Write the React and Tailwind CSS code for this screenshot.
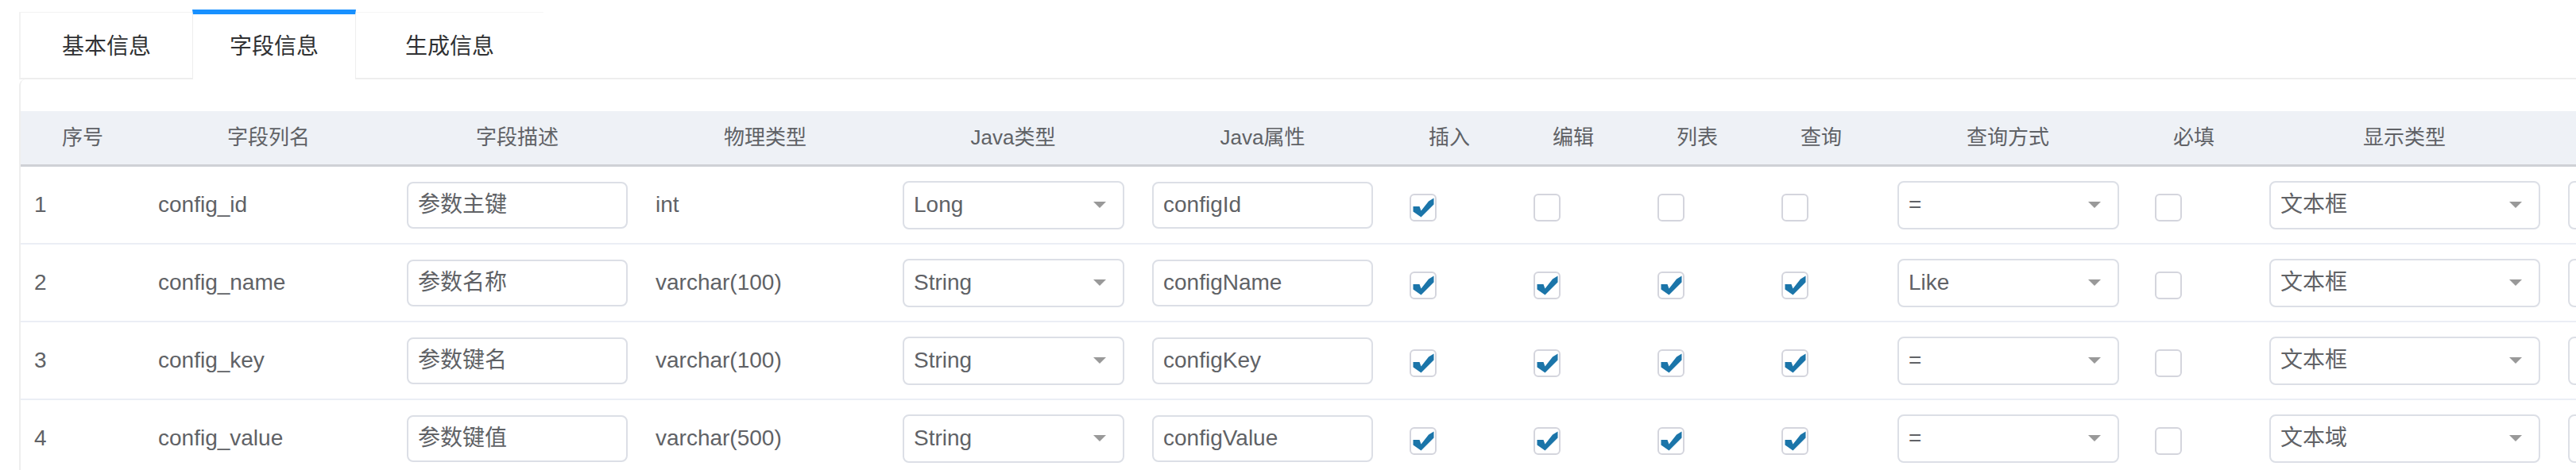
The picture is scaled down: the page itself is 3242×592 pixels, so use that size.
import React from "react";

// 列定义：宽度按截图量出来的像素
const COLS = [
  { key: "idx", title: "序号", w: "w-[156px]" },
  { key: "column", title: "字段列名", w: "w-[312px]" },
  { key: "comment", title: "字段描述", w: "w-[314px]" },
  { key: "sqlType", title: "物理类型", w: "w-[310px]" },
  { key: "javaType", title: "Java类型", w: "w-[314px]" },
  { key: "javaField", title: "Java属性", w: "w-[314px]" },
  { key: "insert", title: "插入", w: "w-[156px]" },
  { key: "edit", title: "编辑", w: "w-[156px]" },
  { key: "list", title: "列表", w: "w-[156px]" },
  { key: "query", title: "查询", w: "w-[156px]" },
  { key: "queryType", title: "查询方式", w: "w-[314px]" },
  { key: "required", title: "必填", w: "w-[154px]" },
  { key: "htmlType", title: "显示类型", w: "w-[376px]" },
  // 最后一列被截在画面外，标题看不到
  { key: "dictType", title: "", w: "w-[314px]" },
];

const ROWS = [
  { idx: 1, column: "config_id", comment: "参数主键", sqlType: "int", javaType: "Long", javaField: "configId", insert: true, edit: false, list: false, query: false, queryType: "=", required: false, htmlType: "文本框" },
  { idx: 2, column: "config_name", comment: "参数名称", sqlType: "varchar(100)", javaType: "String", javaField: "configName", insert: true, edit: true, list: true, query: true, queryType: "Like", required: false, htmlType: "文本框" },
  { idx: 3, column: "config_key", comment: "参数键名", sqlType: "varchar(100)", javaType: "String", javaField: "configKey", insert: true, edit: true, list: true, query: true, queryType: "=", required: false, htmlType: "文本框" },
  { idx: 4, column: "config_value", comment: "参数键值", sqlType: "varchar(500)", javaType: "String", javaField: "configValue", insert: true, edit: true, list: true, query: true, queryType: "=", required: false, htmlType: "文本域" },
];

function TextInput({ value }) {
  return (
    <div className="w-[278px] h-[59px] border-2 border-[#dcdfe6] rounded-[8px] bg-white flex items-center pl-[12px] text-[28px] text-[#606266]">
      {value}
    </div>
  );
}

function Select({ value, w = "w-[279px]" }) {
  return (
    <div className={`${w} h-[61px] border-2 border-[#dcdfe6] rounded-[8px] bg-white flex items-center justify-between pl-[12px] pr-[21px] text-[28px] text-[#606266]`}>
      <span>{value}</span>
      <svg width="16" height="8" viewBox="0 0 16 8">
        <polygon points="0,0 16,0 8,8" fill="#999999" />
      </svg>
    </div>
  );
}

function Check({ checked }) {
  return (
    <div className="mt-[6px] w-[34px] h-[35px] rounded-[6px] border-2 border-[#d4d5dd] bg-white">
      {checked && (
        <svg className="block w-full h-full" viewBox="0 0 30 31">
          <polygon points="2.5,14 10.5,14 12.5,19.5 22,7.5 28.5,3.5 28.5,11.5 12.5,27.5 2.5,20.5" fill="#1b75a9" />
        </svg>
      )}
    </div>
  );
}

function Cell({ col, row }) {
  const v = row[col.key];
  switch (col.key) {
    case "idx":
    case "column":
    case "sqlType":
      return <div className="px-[17px] text-[28px] text-[#606266]">{v}</div>;
    case "comment":
    case "javaField":
      return <div className="px-[18px]"><TextInput value={v} /></div>;
    case "javaType":
    case "queryType":
      return <div className="px-[18px]"><Select value={v} /></div>;
    case "htmlType":
      return <div className="px-[18px]"><Select value={v} w="w-[341px]" /></div>;
    case "dictType":
      return <div className="px-[18px]"><Select value="" /></div>;
    default:
      return <div className="pl-[28px]"><Check checked={v} /></div>;
  }
}

export default function App() {
  return (
    <div className="h-[592px] w-full overflow-hidden bg-white pl-[24px] pt-[12px] font-['Liberation_Sans','Noto_Sans_CJK_SC',sans-serif]">
      {/* tabs */}
      <div className="flex items-end h-[88px]">
        <div className="w-[218px] h-[85px] flex items-center justify-center pt-[4px] border-t border-l-2 border-[#f2f2f2] border-b-2 border-b-[#eeeeee] text-[28px] text-[#303133]">
          基本信息
        </div>
        <div className="w-[206px] h-[88px] flex items-center justify-center border-t-[6px] border-t-[#1890ff] border-x border-x-[#eeeeee] text-[28px] text-[#303133]">
          字段信息
        </div>
        <div className="w-[236px] h-[85px] flex items-center justify-center pt-[4px] border-t border-[#f6f6f6] border-b-2 border-b-[#eeeeee] text-[28px] text-[#303133]">
          生成信息
        </div>
        <div className="flex-1 h-[85px] border-b-2 border-[#eeeeee]" />
      </div>

      {/* table */}
      <div className="border-l-2 border-[#eeeeee] rounded-tl-[8px] pt-[40px]">
        <div className="w-max">
          <div className="flex h-[70px] bg-[#eef1f6] border-b-[3px] border-[#cfd1d6]">
            {COLS.map((c) => (
              <div key={c.key} className={`${c.w} shrink-0 flex items-center justify-center text-[26px] text-[#606266]`}>
                {c.title}
              </div>
            ))}
          </div>
          {ROWS.map((r) => (
            <div key={r.idx} className="flex h-[98px] border-b-2 border-[#ebeef5]">
              {COLS.map((c) => (
                <div key={c.key} className={`${c.w} shrink-0 flex items-center`}>
                  <Cell col={c} row={r} />
                </div>
              ))}
            </div>
          ))}
        </div>
      </div>
    </div>
  );
}
